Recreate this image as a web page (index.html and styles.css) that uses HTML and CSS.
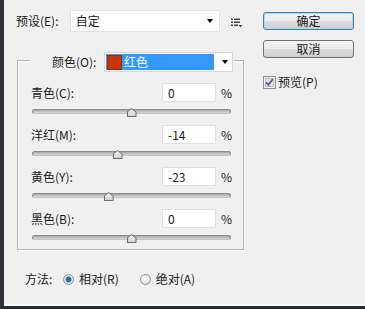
FILE: index.html
```html
<!DOCTYPE html>
<html lang="zh-CN">
<head>
  <meta charset="UTF-8">
  <title>可选颜色</title>
  <link rel="stylesheet" href="styles.css">
</head>
<body>
  <div class="dialog">
    <!-- Left: preset + colour group -->
    <div class="main">
      <div class="preset-row">
        <span class="label preset-label">预设(E):</span>
        <div class="select preset-select">
          <span>自定</span>
          <span class="arrow"></span>
        </div>
        <svg class="list-icon" width="12" height="10" viewBox="0 0 12 10">
          <rect x="0" y="0.5" width="2" height="1.5" fill="#444"/>
          <rect x="3" y="0.5" width="6" height="1.5" fill="#444"/>
          <rect x="0" y="3.5" width="2" height="1.5" fill="#444"/>
          <rect x="3" y="3.5" width="6" height="1.5" fill="#444"/>
          <rect x="0" y="6.5" width="2" height="1.5" fill="#444"/>
          <rect x="3" y="6.5" width="4" height="1.5" fill="#444"/>
          <polygon points="7.5,7 11.5,7 9.5,9.5" fill="#444"/>
        </svg>
      </div>

      <div class="group">
        <div class="group-head">
          <span class="label">颜色(O):</span>
          <div class="select color-select">
            <div class="color-value"><span class="swatch"></span>红色</div>
            <span class="arrow"></span>
          </div>
        </div>

        <div class="adj">
          <div class="adj-top">
            <span class="label">青色(C):</span>
            <div class="num">0</div>
            <span class="pct">%</span>
          </div>
          <div class="slider"><div class="track"></div><span class="thumb" style="left: 50%"></span></div>
        </div>

        <div class="adj">
          <div class="adj-top">
            <span class="label">洋红(M):</span>
            <div class="num">-14</div>
            <span class="pct">%</span>
          </div>
          <div class="slider"><div class="track"></div><span class="thumb" style="left: 43%"></span></div>
        </div>

        <div class="adj">
          <div class="adj-top">
            <span class="label">黄色(Y):</span>
            <div class="num">-23</div>
            <span class="pct">%</span>
          </div>
          <div class="slider"><div class="track"></div><span class="thumb" style="left: 38.5%"></span></div>
        </div>

        <div class="adj">
          <div class="adj-top">
            <span class="label">黑色(B):</span>
            <div class="num">0</div>
            <span class="pct">%</span>
          </div>
          <div class="slider"><div class="track"></div><span class="thumb" style="left: 50%"></span></div>
        </div>
      </div>

      <div class="method">
        <span class="label method-label">方法:</span>
        <span class="radio checked"></span>
        <span class="label radio-text">相对(R)</span>
        <span class="radio"></span>
        <span class="label radio-text">绝对(A)</span>
      </div>
    </div>

    <!-- Right: buttons -->
    <div class="side">
      <div class="btn default">确定</div>
      <div class="btn">取消</div>
      <div class="check-row">
        <svg class="checkbox" width="13" height="13" viewBox="0 0 13 13">
          <rect x="0.5" y="0.5" width="12" height="12" fill="#f4f4f4" stroke="#8e8f8f"/>
          <rect x="2.5" y="2.5" width="8" height="8" fill="#e2e4e8" stroke="#b9bcc2"/>
          <path d="M3.2 6.4 L5.4 8.8 L9.8 3.2" fill="none" stroke="#4a5e86" stroke-width="1.8"/>
        </svg>
        <span class="label">预览(P)</span>
      </div>
    </div>
  </div>
</body>
</html>
```

FILE: styles.css
```css
/* Base */
body {
  margin: 0;
  background: #f0f0f0;
  font-family: "Noto Sans CJK SC", "Noto Sans", sans-serif;
  font-size: 12px;
  color: #1a1a1a;
}

.dialog {
  display: flex;
  width: 365px;
  height: 309px;
  box-sizing: border-box;
  border-left: 4px solid #2e3236;
  border-bottom: 3px solid #2a2d30;
  box-shadow: inset 0 -2px 0 #fbfbfb;
  background: #f0f0f0;
}

.label {
  line-height: 16px;
  white-space: nowrap;
}

/* Left column */
.main {
  width: 227px;
  padding: 10px 0 0 12px;
}

.preset-row {
  display: flex;
  align-items: center;
  height: 22px;
}
.preset-label {
  width: 54px;
}

.select {
  display: flex;
  align-items: center;
  box-sizing: border-box;
  background: #fff;
  border: 1px solid #e2e2e2;
}
.preset-select {
  width: 151px;
  height: 22px;
  padding: 0 6px 0 5px;
  line-height: 16px;
}
.arrow {
  margin-left: auto;
  width: 0;
  height: 0;
  border-top: 4px solid #000;
  border-left: 3.5px solid transparent;
  border-right: 3.5px solid transparent;
}
.list-icon {
  margin: 3px 0 0 11px;
}

/* Colour group */
.group {
  margin: 28px 0 0 1px;
  width: 227px;
  height: 190px;
  box-sizing: border-box;
  border: 1px solid #b4b4b4;
  box-shadow: 1px 1px 0 #fdfdfd, inset 1px 1px 0 #fdfdfd;
}
.group-head {
  display: flex;
  align-items: center;
  height: 20px;
  margin: -9px 9px 0 12px;
  padding: 0 1px 0 22px;
  background: #f0f0f0;
}
.group-head .label {
  flex: 1;
}
.color-select {
  width: 129px;
  height: 20px;
  padding: 1px 4px 1px 1px;
  border-color: #d8d8d8;
}
.color-value {
  display: flex;
  align-items: center;
  width: 108px;
  height: 16px;
  background: #3399ff;
  color: #fff;
  line-height: 16px;
}
.swatch {
  width: 15px;
  height: 15px;
  margin: 0 2px 0 1px;
  box-sizing: border-box;
  background: #cc3308;
  border: 1px solid #9a2a10;
}

/* Adjustment rows */
.adj {
  padding: 0 0 0 13px;
  margin-top: 11px;
  height: 35px;
}
.adj + .adj {
  margin-top: 7px;
}
.adj-top {
  display: flex;
  align-items: center;
  height: 19px;
}
.adj-top .label {
  flex: 1;
}
.num {
  width: 54px;
  height: 19px;
  box-sizing: border-box;
  padding-left: 5px;
  line-height: 17px;
  background: #fff;
  border: 1px solid #e0e0e0;
}
.pct {
  width: 27px;
  padding-left: 5px;
  box-sizing: border-box;
  line-height: 16px;
}

.slider {
  position: relative;
  margin: 2px 0 0 1px;
  width: 199px;
  height: 14px;
}
.track {
  position: relative;
  top: 5px;
  height: 5px;
  box-sizing: border-box;
  border-radius: 3px;
  border: 1px solid #8c8c8c;
  border-bottom-color: #c4c4c4;
  background: linear-gradient(#a8a8a8, #d8d8d8);
}
.thumb {
  position: absolute;
  top: 4px;
  width: 10px;
  height: 9px;
  margin-left: -5px;
  background: #6e6e6e;
  clip-path: polygon(50% 0, 100% 45%, 100% 100%, 0 100%, 0 45%);
}
.thumb::after {
  content: "";
  position: absolute;
  inset: 1px;
  background: linear-gradient(#f4f4f4, #d2d2d2);
  clip-path: polygon(50% 0, 100% 45%, 100% 100%, 0 100%, 0 45%);
}

/* Method row */
.method {
  display: flex;
  align-items: center;
  margin-top: 21px;
  padding-left: 9px;
  height: 16px;
}
.method-label {
  width: 38px;
}
.radio {
  width: 11px;
  height: 11px;
  box-sizing: border-box;
  border-radius: 50%;
  border: 1px solid #8e8f8f;
  background: radial-gradient(circle at 40% 35%, #ffffff, #d4d4d4);
}
.radio.checked {
  background: radial-gradient(circle, #1b5c8c 0, #2b7ab8 2.5px, #e8e8e8 3.5px, #c8c8c8 100%);
}
.radio-text {
  margin: 0 21px 0 5px;
}

/* Right column */
.side {
  margin-left: 20px;
  padding-top: 12px;
  width: 91px;
}
.btn {
  height: 18px;
  box-sizing: border-box;
  border: 1px solid #707070;
  border-radius: 3px;
  background: linear-gradient(#f3f3f3 0%, #ebebeb 50%, #dddddd 51%, #cfcfcf 100%);
  text-align: center;
  line-height: 16px;
}
.btn.default {
  border-color: #3c7fb1;
  box-shadow: inset 0 0 0 1px #a8d8f4;
}
.btn + .btn {
  margin-top: 10px;
}
.check-row {
  display: flex;
  align-items: center;
  margin-top: 16px;
}
.checkbox {
  margin-right: 2px;
}
```
